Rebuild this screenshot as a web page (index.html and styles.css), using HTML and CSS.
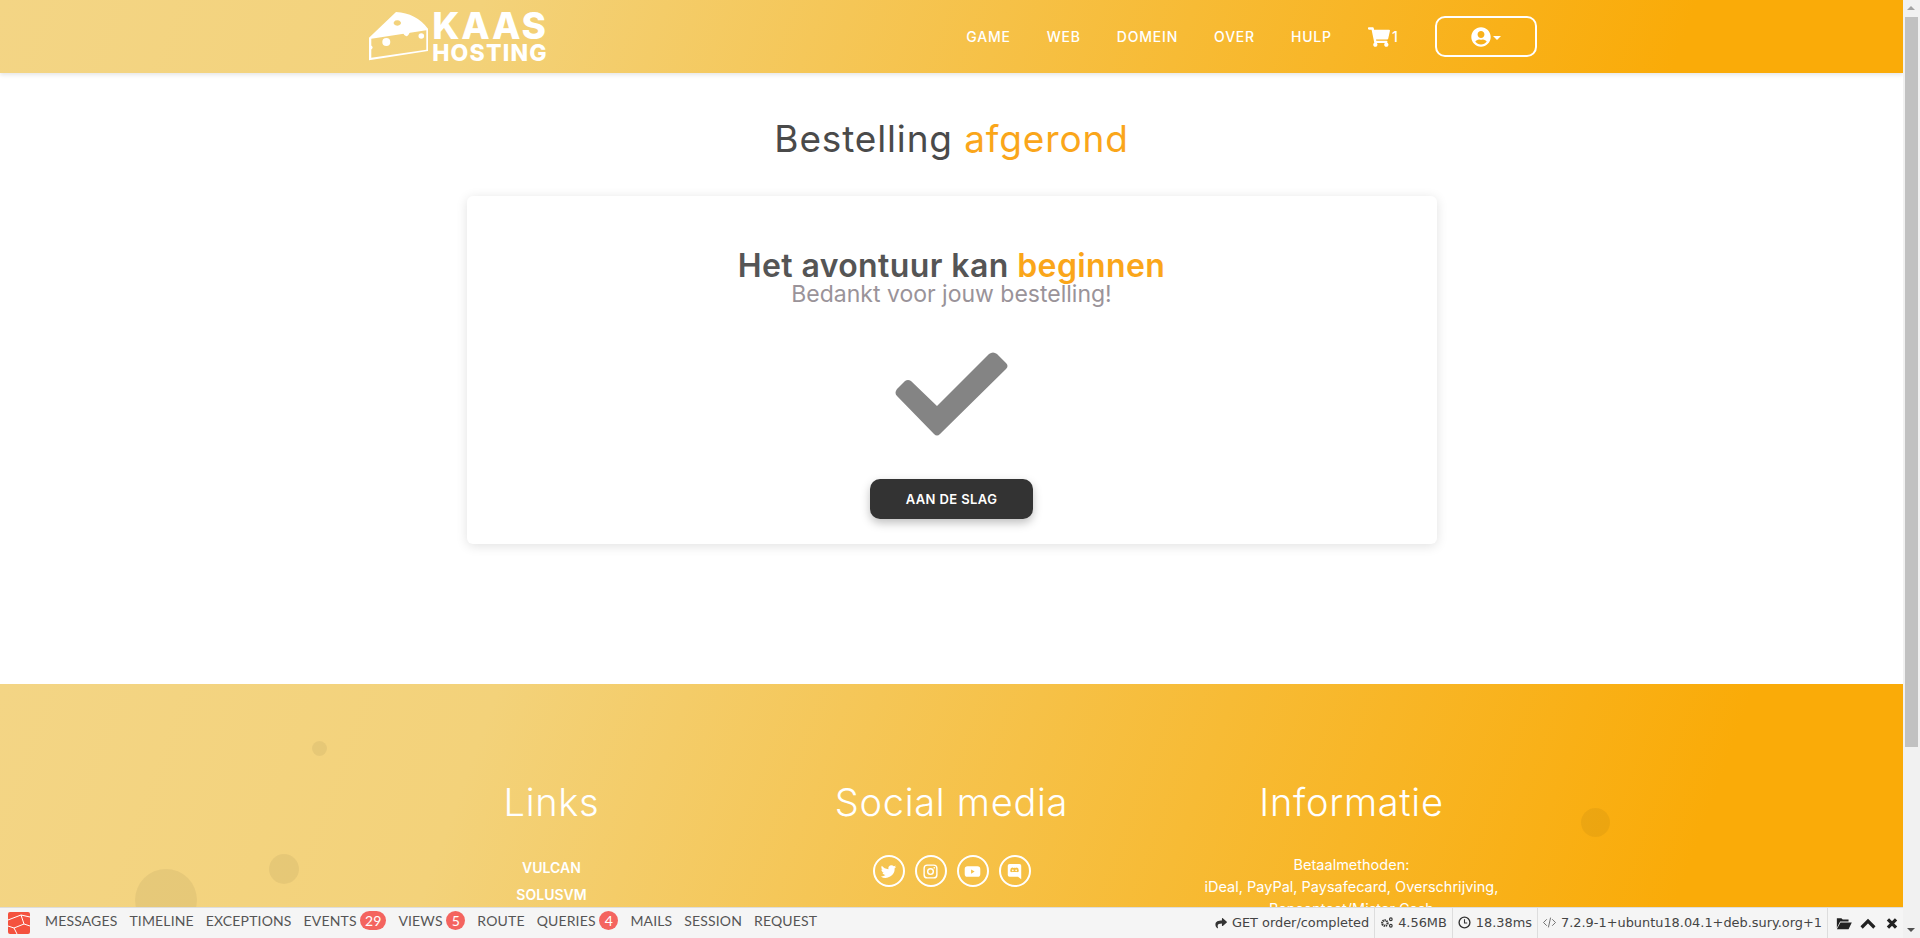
FILE: index.html
```html
<!DOCTYPE html>
<html lang="nl">
<head>
    <meta charset="UTF-8">
    <meta name="viewport" content="width=device-width, initial-scale=1.0">
    <title>Bestelling afgerond - Kaas Hosting</title>
    <link rel="stylesheet" href="styles.css">
</head>
<body>
    <div class="app">
        <div class="page">
            <header class="topbar">
                <div class="topbar-inner">
                    <a class="logo" href="#">
                        <svg class="logo-cheese" viewBox="0 0 64 52" xmlns="http://www.w3.org/2000/svg">
                            <path fill="#fff" fill-rule="evenodd" d="M1 26.700 L28 1 Q48 2 60 17.700 L60 40 L1 49.300 Z M3.300 27.700 L3.300 34.500 Q6 36.500 3.300 38.500 L3.300 46.700 L58.300 38.700 L58.300 19.300 Z M29.300 9.300 a3.700 2.700 0 1 0 .01 0 Z"/>
                            <circle cx="18.300" cy="31" r="4" fill="#fff"/>
                            <circle cx="53.300" cy="25" r="2.800" fill="#fff"/>
                            <path d="M35 22 Q38.500 29 42 21 Z" fill="#fff"/>
                        </svg>
                        <span class="logo-text">
                            <span class="logo-big">KAAS</span>
                            <span class="logo-small">HOSTING</span>
                        </span>
                    </a>
                    <nav class="nav">
                        <a href="#">GAME</a>
                        <a href="#">WEB</a>
                        <a href="#">DOMEIN</a>
                        <a href="#">OVER</a>
                        <a href="#">HULP</a>
                        <a class="nav-cart" href="#">
                            <svg viewBox="0 0 576 512" xmlns="http://www.w3.org/2000/svg"><path fill="#fff" d="M528 301l47-208c3-15-8-29-23-29H159l-9-45C148 8 138 0 127 0H24C11 0 0 11 0 24v16c0 13 11 24 24 24h70l70 343c-17 10-28 28-28 49 0 31 25 56 56 56s56-25 56-56c0-16-6-30-17-40h210c-11 10-17 24-17 40 0 31 25 56 56 56s56-25 56-56c0-22-13-41-32-51l5-24c3-15-8-29-23-29H218l-7-32h293c11 0 21-8 24-19z"/></svg>
                            <span>1</span>
                        </a>
                        <a class="nav-user" href="#">
                            <svg viewBox="0 0 496 512" xmlns="http://www.w3.org/2000/svg"><path fill="#fff" d="M248 8C111 8 0 119 0 256s111 248 248 248 248-111 248-248S385 8 248 8zm0 96c49 0 88 39 88 88s-39 88-88 88-88-39-88-88 39-88 88-88zm0 344c-59 0-111-27-146-69 19-35 55-59 98-59 2 0 5 0 7 1 13 4 27 7 41 7s28-3 41-7c2-1 5-1 7-1 43 0 79 24 98 59-35 42-87 69-146 69z"/></svg>
                            <span class="caret"></span>
                        </a>
                    </nav>
                </div>
            </header>

            <main class="content">
                <h1 class="page-title">Bestelling <span class="accent">afgerond</span></h1>
                <div class="card">
                    <h2 class="card-title">Het avontuur kan <span class="accent">beginnen</span></h2>
                    <p class="card-sub">Bedankt voor jouw bestelling!</p>
                    <svg class="check" viewBox="0 0 113 85" xmlns="http://www.w3.org/2000/svg">
                        <path fill="#848484" d="M2 37 L10 29 Q13 27 16 29 L42 54 L94 2 Q98 -1 102 2 L111 11 Q114 14 111 17 L45 82 Q42 85 39 82 L2 44 Q-1 41 2 37 Z"/>
                    </svg>
                    <a class="btn-dark" href="#">AAN DE SLAG</a>
                </div>
            </main>

            <footer class="footer">
                <span class="hole hole-a"></span>
                <span class="hole hole-b"></span>
                <span class="hole hole-c"></span>
                <span class="hole hole-d"></span>
                <div class="footer-inner">
                    <div class="footer-col">
                        <h3>Links</h3>
                        <ul class="footer-links">
                            <li><a href="#">VULCAN</a></li>
                            <li><a href="#">SOLUSVM</a></li>
                        </ul>
                    </div>
                    <div class="footer-col">
                        <h3>Social media</h3>
                        <div class="socials">
                            <a href="#"><svg viewBox="0 0 24 24" xmlns="http://www.w3.org/2000/svg"><path fill="#fff" d="M23 5.300c-.8.400-1.700.6-2.600.7.900-.6 1.600-1.400 2-2.500-.9.500-1.800.9-2.900 1.100A4.500 4.500 0 0 0 11.800 8.700C8 8.500 4.700 6.700 2.500 3.900c-1.200 2.100-.6 4.700 1.400 6-.7 0-1.400-.2-2-.6 0 2.200 1.500 4.100 3.600 4.500-.7.200-1.400.2-2 .1.600 1.800 2.200 3.100 4.200 3.100A9.100 9.100 0 0 1 1 18.900 12.800 12.800 0 0 0 20.700 7.500c.9-.6 1.700-1.400 2.300-2.200z"/></svg></a>
                            <a href="#"><svg viewBox="0 0 24 24" xmlns="http://www.w3.org/2000/svg"><rect x="3" y="3" width="18" height="18" rx="4.500" fill="none" stroke="#fff" stroke-width="2"/><circle cx="12" cy="12" r="4" fill="none" stroke="#fff" stroke-width="2"/><circle cx="17.300" cy="6.700" r="1.200" fill="#fff"/></svg></a>
                            <a href="#"><svg viewBox="0 0 24 24" xmlns="http://www.w3.org/2000/svg"><path fill="#fff" fill-rule="evenodd" d="M5 4.500h14a4 4 0 0 1 4 4v7a4 4 0 0 1-4 4H5a4 4 0 0 1-4-4v-7a4 4 0 0 1 4-4zM10 9v6l5-3z"/></svg></a>
                            <a href="#"><svg viewBox="0 0 24 24" xmlns="http://www.w3.org/2000/svg"><path fill="#fff" fill-rule="evenodd" d="M5 1.500h14a2.500 2.500 0 0 1 2.500 2.500v19l-4.500-3.500H5A2.500 2.500 0 0 1 2.500 17V4A2.500 2.500 0 0 1 5 1.500zM9.500 6.500c-1 0-2 .4-2.700 1-.6 1.500-.9 3-.8 4.500.7.700 1.700 1 2.500 1.100l.6-.9c1.800.7 4 .7 5.800 0l.6.9c.8-.1 1.800-.4 2.500-1.100.1-1.500-.2-3-.8-4.500-.7-.6-1.700-1-2.700-1l-.3.600c-1.400-.3-2.400-.3-3.800 0zM9.700 9a1.100 1.200 0 1 1 0 2.400 1.100 1.200 0 0 1 0-2.400zm4.600 0a1.100 1.200 0 1 1 0 2.400 1.100 1.200 0 0 1 0-2.400z"/></svg></a>
                        </div>
                    </div>
                    <div class="footer-col">
                        <h3>Informatie</h3>
                        <p class="footer-info">Betaalmethoden:<br>iDeal, PayPal, Paysafecard, Overschrijving,<br>Bancontact/Mister Cash</p>
                    </div>
                </div>
            </footer>

            <!-- debugbar ligt over de pagina heen -->
            <div class="debugbar">
                <svg class="debug-logo" viewBox="0 0 22 22" xmlns="http://www.w3.org/2000/svg">
                    <rect width="22" height="22" rx="2" fill="#f4523e"/>
                    <path d="M0 8 L13 3 L16 12 L6 16 L9 22 M13 3 L22 5 M16 12 L22 14 M6 16 L0 14" fill="none" stroke="#fff" stroke-width="1"/>
                </svg>
                <div class="debug-tabs">
                    <a>MESSAGES</a>
                    <a>TIMELINE</a>
                    <a>EXCEPTIONS</a>
                    <a>EVENTS <b class="badge badge-wide">29</b></a>
                    <a>VIEWS <b class="badge">5</b></a>
                    <a>ROUTE</a>
                    <a>QUERIES <b class="badge">4</b></a>
                    <a>MAILS</a>
                    <a>SESSION</a>
                    <a>REQUEST</a>
                </div>
                <div class="debug-meta">
                    <span class="meta-item">
                        <svg viewBox="0 0 512 512" xmlns="http://www.w3.org/2000/svg"><path fill="#333" d="M504 223L348 88c-14-12-36-2-36 17v71C169 178 56 207 56 342c0 55 35 109 75 137 12 9 30-2 25-16-41-132 20-167 156-169v78c0 19 22 29 36 17l156-135c10-9 10-24 0-31z"/></svg>
                        GET order/completed
                    </span>
                    <span class="meta-item">
                        <svg viewBox="0 0 24 24" xmlns="http://www.w3.org/2000/svg"><circle cx="9" cy="13" r="5" fill="none" stroke="#333" stroke-width="4" stroke-dasharray="2.500 1.200"/><circle cx="20" cy="6" r="2.500" fill="none" stroke="#333" stroke-width="2"/><circle cx="20" cy="18" r="2.500" fill="none" stroke="#333" stroke-width="2"/></svg>
                        4.56MB
                    </span>
                    <span class="meta-item">
                        <svg viewBox="0 0 24 24" xmlns="http://www.w3.org/2000/svg"><circle cx="12" cy="12" r="10" fill="none" stroke="#333" stroke-width="2.500"/><path d="M12 6v7h5" fill="none" stroke="#333" stroke-width="2"/></svg>
                        18.38ms
                    </span>
                    <span class="meta-item">
                        <svg viewBox="0 0 24 24" xmlns="http://www.w3.org/2000/svg"><path d="M7 6l-6 6 6 6M17 6l6 6-6 6M14 3l-4 18" fill="none" stroke="#555" stroke-width="1.500"/></svg>
                        7.2.9-1+ubuntu18.04.1+deb.sury.org+1
                    </span>
                    <span class="debug-actions">
                        <svg viewBox="0 0 24 20" xmlns="http://www.w3.org/2000/svg"><path fill="#222" d="M1 2h7l2 2h9v3H6L1 17zM6.500 8.500H24L19 19H1z"/></svg>
                        <svg viewBox="0 0 20 14" xmlns="http://www.w3.org/2000/svg"><path d="M2 12l8-8 8 8" fill="none" stroke="#222" stroke-width="4"/></svg>
                        <svg viewBox="0 0 16 16" xmlns="http://www.w3.org/2000/svg"><path d="M3 3l10 10M13 3L3 13" fill="none" stroke="#222" stroke-width="4"/></svg>
                    </span>
                </div>
            </div>
        </div>

        <div class="scrollbar">
            <span class="arrow-up"></span>
            <span class="thumb"></span>
            <span class="arrow-down"></span>
        </div>
    </div>
</body>
</html>
```

FILE: styles.css
```css
:root {
    --accent: #faa61a;
    --grad: linear-gradient(110deg, #f3d585 0%, #f3d27a 25%, #f7bb35 62%, #faab08 88%, #faab08 100%);
}
html, body { height: 100%; }
body {
    margin: 0;
    overflow: hidden;
    font-family: Inter, "Open Sans", sans-serif;
    color: #444;
    background: #fff;
}
a { color: inherit; text-decoration: none; }
.accent { color: var(--accent); }

.app { display: flex; height: 100vh; }
.page { position: relative; flex: 1; min-width: 0; overflow: hidden; }

/* header */
.topbar {
    height: 73px;
    background: var(--grad);
    box-shadow: 0 2px 4px rgba(0, 0, 0, 0.1);
}
.topbar-inner {
    width: 1200px;
    height: 100%;
    margin: 0 auto;
    display: flex;
    align-items: center;
    justify-content: space-between;
}
.logo { display: flex; align-items: center; gap: 0; margin-left: 16px; color: #fff; }
.logo-cheese { width: 64px; height: 52px; }
.logo-text { display: flex; flex-direction: column; align-items: center; font-weight: 800; width: 117px; }
.logo-big { font-size: 37px; line-height: 32px; letter-spacing: 1.8px; }
.logo-small { font-size: 23px; line-height: 22px; letter-spacing: 1.2px; }
.nav {
    display: flex;
    align-items: center;
    gap: 36px;
    margin-right: 15px;
    color: #fff;
    font-size: 14px;
    font-weight: 500;
    letter-spacing: 0.8px;
}
.nav-cart { display: flex; align-items: center; gap: 2px; }
.nav-cart svg { width: 22px; height: 20px; }
.nav-user {
    width: 102px;
    height: 41px;
    box-sizing: border-box;
    border: 2px solid #fff;
    border-radius: 10px;
    display: flex;
    align-items: center;
    justify-content: center;
    gap: 2px;
}
.nav-user svg { width: 20px; height: 20px; }
.caret { border: 4px solid transparent; border-top-color: #fff; border-bottom: 0; margin-top: 3px; }

/* inhoud */
.content { height: 611px; box-sizing: border-box; padding-top: 45px; }
.page-title {
    margin: 0;
    text-align: center;
    font-size: 37px;
    line-height: 42px;
    font-weight: 400;
    letter-spacing: 0.85px;
    color: #4a4a4a;
}
.card {
    width: 970px;
    height: 348px;
    box-sizing: border-box;
    margin: 36px auto 0;
    padding: 52px 0 0;
    background: #fff;
    border-radius: 6px;
    box-shadow: 0 2px 12px rgba(0, 0, 0, 0.12);
    display: flex;
    flex-direction: column;
    align-items: center;
}
.card-title { margin: 0; font-size: 32px; line-height: 35px; font-weight: 600; letter-spacing: 0.4px; color: #555; }
.card-sub { margin: 0; font-size: 23px; line-height: 23px; color: #9a9399; }
.check { width: 113px; height: 85px; margin-top: 46px; }
.btn-dark {
    margin-top: 42px;
    width: 163px;
    height: 40px;
    display: flex;
    align-items: center;
    justify-content: center;
    background: #333;
    color: #fff;
    border-radius: 10px;
    font-size: 13px;
    font-weight: 600;
    letter-spacing: 0.4px;
    box-shadow: 0 4px 10px rgba(0, 0, 0, 0.25);
}

/* footer */
.footer { position: relative; height: 254px; background: var(--grad); color: #fff; overflow: hidden; }
.footer-inner {
    position: relative;
    width: 1200px;
    margin: 0 auto;
    padding-top: 96px;
    display: grid;
    grid-template-columns: repeat(3, 1fr);
    text-align: center;
}
.footer-col h3 { margin: 0; font-size: 38px; line-height: 44px; font-weight: 300; letter-spacing: 0.7px; }
.footer-links { list-style: none; margin: 30px 0 0; padding: 0; font-size: 14px; font-weight: 600; line-height: 27px; }
.socials { display: flex; justify-content: center; gap: 10px; margin-top: 31px; }
.socials a {
    width: 32px;
    height: 32px;
    box-sizing: border-box;
    border: 2px solid #fff;
    border-radius: 50%;
    display: flex;
    align-items: center;
    justify-content: center;
}
.socials svg { width: 17px; height: 17px; }
.footer-info { margin: 30px 0 0; font-size: 14.5px; line-height: 22px; }
.hole { position: absolute; border-radius: 50%; background: rgba(0, 0, 0, 0.05); }
.hole-a { left: 312px; top: 57px; width: 15px; height: 15px; }
.hole-b { left: 269px; top: 170px; width: 30px; height: 30px; }
.hole-c { left: 135px; top: 185px; width: 62px; height: 62px; }
.hole-d { left: 1581px; top: 124px; width: 29px; height: 29px; }

/* debugbar */
.debugbar {
    position: absolute;
    left: 0;
    right: 0;
    bottom: 0;
    height: 31px;
    box-sizing: border-box;
    border-top: 1px solid #ddd;
    background: #f5f5f5;
    display: flex;
    align-items: center;
    justify-content: space-between;
    color: #555;
}
.debug-logo { width: 22px; height: 22px; margin-left: 8px; flex: none; }
.debug-tabs {
    display: flex;
    align-items: center;
    gap: 12px;
    margin-left: 15px;
    margin-right: auto;
    padding-bottom: 5px;
    font-family: Lato, sans-serif;
    font-size: 14px;
    letter-spacing: 0.15px;
}
.badge {
    display: inline-block;
    min-width: 19px;
    height: 19px;
    line-height: 19px;
    text-align: center;
    border-radius: 10px;
    background: #f4645f;
    color: #fff;
    font-weight: 400;
}
.badge-wide { min-width: 26px; }
.debug-meta {
    display: flex;
    align-items: stretch;
    height: 100%;
    font-family: "DejaVu Sans", sans-serif;
    font-size: 12.9px;
    color: #444;
}
.meta-item {
    display: flex;
    align-items: center;
    gap: 5px;
    padding: 0 5px 2px;
    border-right: 1px solid #ddd;
    white-space: nowrap;
}
.meta-item svg { width: 13px; height: 13px; }
.debug-actions { display: flex; align-items: center; gap: 8px; padding: 0 3px 0 8px; }
.debug-actions svg { width: 16px; height: 13px; }

/* scrollbar rechts */
.scrollbar {
    position: relative;
    flex: none;
    width: 17px;
    background: #f1f1f1;
}
.thumb { position: absolute; top: 17px; left: 2px; right: 2px; height: 730px; background: #c1c1c1; }
.arrow-up, .arrow-down { position: absolute; left: 4px; border: 4.500px solid transparent; }
.arrow-up { top: 2px; border-bottom-color: #a3a3a3; }
.arrow-down { bottom: 2px; border-top-color: #505050; }
```
